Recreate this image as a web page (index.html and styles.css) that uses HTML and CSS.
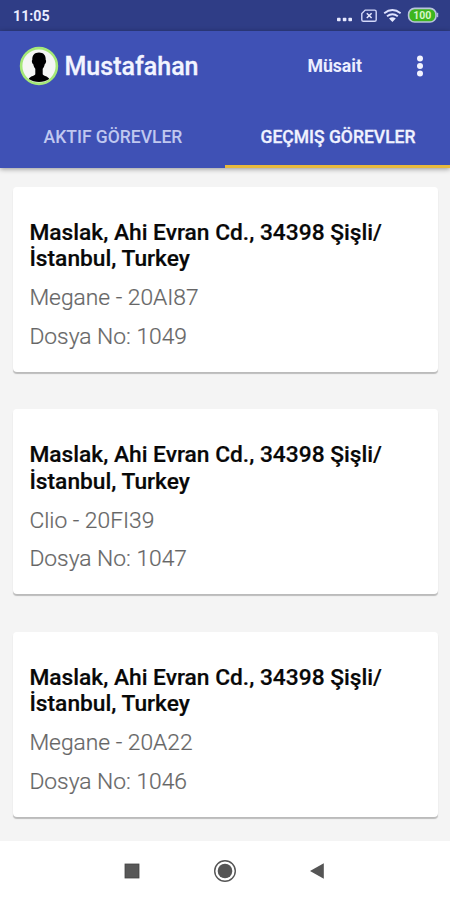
FILE: index.html
```html
<!DOCTYPE html>
<html lang="tr">
<head>
<meta charset="utf-8">
<title>Görevler</title>
<link rel="stylesheet" href="styles.css">
</head>
<body>
<div class="statusbar">
  <span class="clock">11:05</span>
  <svg class="status-icons" width="110" height="31" viewBox="0 0 110 31">
    <g fill="#e6e9ff"><rect x="2" y="17.8" width="3.6" height="3.4" rx=".8"/><rect x="7.8" y="17.8" width="3.6" height="3.4" rx=".8"/><rect x="13.4" y="17.8" width="3.6" height="3.4" rx=".8"/></g>
    <path d="M30.2 10.1H39.6Q41.2 10.1 41.2 11.7V19.7Q41.2 21.3 39.6 21.3H28.4Q26.8 21.3 26.8 19.7V13.5Z" fill="none" stroke="#d4d9fa" stroke-width="1.4"/>
    <path d="M31.8 13.3L36.6 18M36.6 13.3L31.8 18" stroke="#e6e9ff" stroke-width="1.5"/>
    <g fill="none" stroke="#dfe3ff" stroke-width="1.9"><path d="M49.2 13.3Q57.4 6.9 65.6 13.3"/><path d="M52 16.3Q57.4 12.1 62.8 16.3"/></g>
    <path d="M54 18.4Q57.4 16 60.8 18.4L57.4 22Z" fill="#e6e9ff"/>
    <rect x="73.6" y="8.4" width="27.4" height="13.6" rx="6" fill="#3db51e" stroke="#b9c4dc" stroke-width="1.6"/>
    <path d="M102.4 12.8v4.4" stroke="#aeb9da" stroke-width="1.6"/>
    <text class="battery-text" x="87.2" y="19.3" text-anchor="middle">100</text>
  </svg>
</div>
<header class="header">
  <div class="toolbar">
    <svg class="avatar" width="40" height="40" viewBox="0 0 40 40">
      <circle cx="20" cy="20" r="17.9" fill="#f5f6f4" stroke="#a5e878" stroke-width="2.6"/>
      <path d="M20 6.5C15.6 6.5 13 9.2 13.3 14C12.4 14.2 13 17.7 14.3 18.2C14.6 20.5 15.6 21.8 16.3 22.7V28.2C15 30.2 10.8 30.2 9.8 33C15.5 37 24.5 37 30.2 33C29.2 30.2 25 30.2 23.7 28.2V22.7C24.4 21.8 25.4 20.5 25.7 18.2C27 17.7 27.6 14.2 26.7 14C27 9.2 24.4 6.5 20 6.5Z" fill="#000"/>
    </svg>
    <h1 class="name">Mustafahan</h1>
    <span class="state">Müsait</span>
    <svg class="more" width="8" height="24" viewBox="0 0 8 24" fill="#f2f3ff"><circle cx="4" cy="4.4" r="3"/><circle cx="4" cy="12" r="3"/><circle cx="4" cy="19.6" r="3"/></svg>
  </div>
  <nav class="tabs">
    <div class="tab">AKTIF GÖREVLER</div>
    <div class="tab active">GEÇMIŞ GÖREVLER</div>
  </nav>
</header>
<main class="list">
  <article class="card">
    <h2>Maslak, Ahi Evran Cd., 34398 Şişli/<br>İstanbul, Turkey</h2>
    <p>Megane - 20AI87</p>
    <p>Dosya No: 1049</p>
  </article>
  <article class="card">
    <h2>Maslak, Ahi Evran Cd., 34398 Şişli/<br>İstanbul, Turkey</h2>
    <p>Clio - 20FI39</p>
    <p>Dosya No: 1047</p>
  </article>
  <article class="card">
    <h2>Maslak, Ahi Evran Cd., 34398 Şişli/<br>İstanbul, Turkey</h2>
    <p>Megane - 20A22</p>
    <p>Dosya No: 1046</p>
  </article>
</main>
<footer class="navbar">
  <svg width="16" height="24" viewBox="0 0 16 24"><rect x="1" y="5" width="14" height="14" fill="#585858" stroke="#454545" stroke-width=".8"/></svg>
  <svg width="24" height="24" viewBox="0 0 24 24"><circle cx="12" cy="12" r="10.3" fill="none" stroke="#555" stroke-width="1.4"/><circle cx="12" cy="12" r="7.3" fill="#555"/></svg>
  <svg width="16" height="24" viewBox="0 0 16 24"><path d="M1 12L14.8 4.3V19.7Z" fill="#555"/></svg>
</footer>
</body>
</html>
```
FILE: styles.css
```css
* { box-sizing: border-box; }
body {
  margin: 0;
  width: 450px;
  height: 900px;
  overflow: hidden;
  display: flex;
  flex-direction: column;
  background: #f4f4f4;
  font-family: Roboto, "Liberation Sans", sans-serif;
}
h1, h2, p { margin: 0; }
.statusbar {
  flex: none;
  height: 31px;
  padding: 0 5px 0 13px;
  display: flex;
  justify-content: space-between;
  align-items: center;
  background: #2f3d86;
  color: #e9ecff;
}
.clock { font-size: 14.2px; font-weight: 700; line-height: 31px; padding-top: 1px; }
.battery-text { font-size: 10.5px; font-weight: 700; fill: #d5f5c9; }
.header {
  flex: none;
  height: 137px;
  background: #3f51b5;
  color: #fff;
  box-shadow: 0 1px 5px rgba(0, 0, 0, .4);
}
.toolbar {
  height: 75px;
  padding: 0 26px 5px 19px;
  display: flex;
  align-items: center;
}
.name { margin-left: 5.5px; font-size: 25px; font-weight: 500; color: #f2f4ff; -webkit-text-stroke: .3px #f2f4ff; }
.state { margin-left: auto; font-size: 17.7px; font-weight: 700; line-height: 20px; padding-bottom: 1px; color: #eceeff; }
.more { margin-left: 54px; }
.tabs { display: flex; height: 62px; }
.tab {
  flex: 1;
  display: flex;
  justify-content: center;
  align-items: center;
  padding: 2px 0 0 1px;
  border-bottom: 3px solid transparent;
  font-size: 17.5px;
  font-weight: 500;
  color: #c0c8f0;
}
.tab.active { border-color: #e8b93c; color: #f0f2ff; -webkit-text-stroke: .3px #f0f2ff; }
.list {
  flex: 1;
  min-height: 0;
  padding: 18.6px 12px 0 13px;
  display: flex;
  flex-direction: column;
  gap: 37.6px;
}
.card {
  flex: none;
  height: 185px;
  padding: 33px 16px 0 16.4px;
  border-radius: 4px;
  background: #fff;
  box-shadow: 0 2px 1px rgba(0, 0, 0, .23);
}
.card h2 { font-size: 22.75px; font-weight: 500; line-height: 26.5px; color: #080808; white-space: nowrap; -webkit-text-stroke: .2px #080808; }
.card p { margin-top: 12.5px; font-size: 22.8px; font-weight: 300; line-height: 26px; color: #666; -webkit-text-stroke: .2px #666; }
.navbar {
  flex: none;
  height: 59px;
  padding: 0 125px 0 124px;
  display: flex;
  justify-content: space-between;
  align-items: center;
  background: #fff;
}
```
